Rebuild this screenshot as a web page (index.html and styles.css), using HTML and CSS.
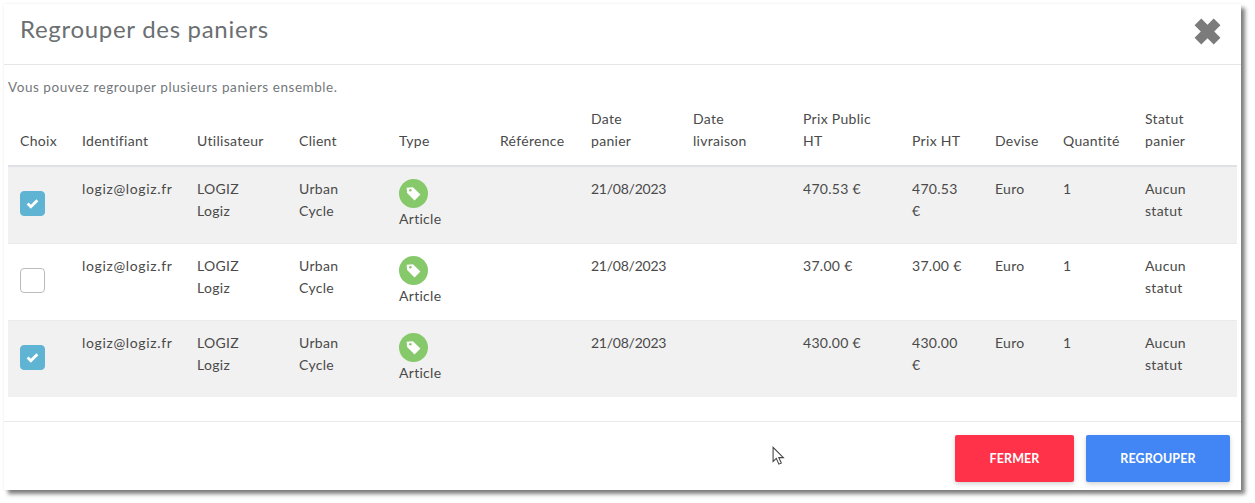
FILE: index.html
```html
<!DOCTYPE html>
<html lang="fr">
<head>
<meta charset="utf-8">
<title>Regrouper des paniers</title>
<link rel="stylesheet" href="styles.css">
</head>
<body>
<div class="modal">
  <header class="modal-header">
    <h1 class="modal-title">Regrouper des paniers</h1>
    <svg class="close-icon" viewBox="0 0 28 28" width="29" height="29" aria-label="Fermer"><path d="M8 1.5 14 7.5 20 1.5 26.5 8 20.5 14 26.5 20 20 26.5 14 20.5 8 26.5 1.5 20 7.5 14 1.5 8Z" fill="#7b7b7b"/></svg>
  </header>
  <div class="modal-body">
    <p class="intro">Vous pouvez regrouper plusieurs paniers ensemble.</p>
    <table class="grid">
      <colgroup>
        <col class="c1"><col class="c2"><col class="c3"><col class="c4"><col class="c5"><col class="c6"><col class="c7"><col class="c8"><col class="c9"><col class="c10"><col class="c11"><col class="c12"><col class="c13">
      </colgroup>
      <thead>
        <tr>
          <th>Choix</th><th>Identifiant</th><th>Utilisateur</th><th>Client</th><th>Type</th><th>Référence</th><th>Date<br>panier</th><th>Date<br>livraison</th><th>Prix Public<br>HT</th><th>Prix HT</th><th>Devise</th><th>Quantité</th><th>Statut<br>panier</th>
        </tr>
      </thead>
      <tbody>
        <tr class="odd">
          <td class="check-cell"><span class="check on"><svg viewBox="0 0 12 10" width="13" height="11"><path d="M1.5 5 4.5 8 10.5 2" fill="none" stroke="#fff" stroke-width="2.6"/></svg></span></td>
          <td class="email">logiz@logiz.fr</td><td>LOGIZ<br>Logiz</td><td>Urban<br>Cycle</td>
          <td class="type-cell"><span class="tag"><svg viewBox="0 0 16 16" width="17" height="17"><path d="M1.5 2.5 7.5 2 14.5 9 9 14.5 2 7.5Z" fill="#fff"/><circle cx="5" cy="5" r="1.2" fill="#86c96b"/></svg></span>Article</td>
          <td></td><td class="date">21/08/2023</td><td></td><td>470.53 €</td><td>470.53<br>€</td><td>Euro</td><td>1</td><td>Aucun<br>statut</td>
        </tr>
        <tr>
          <td class="check-cell"><span class="check"></span></td>
          <td class="email">logiz@logiz.fr</td><td>LOGIZ<br>Logiz</td><td>Urban<br>Cycle</td>
          <td class="type-cell"><span class="tag"><svg viewBox="0 0 16 16" width="17" height="17"><path d="M1.5 2.5 7.5 2 14.5 9 9 14.5 2 7.5Z" fill="#fff"/><circle cx="5" cy="5" r="1.2" fill="#86c96b"/></svg></span>Article</td>
          <td></td><td class="date">21/08/2023</td><td></td><td>37.00 €</td><td>37.00 €</td><td>Euro</td><td>1</td><td>Aucun<br>statut</td>
        </tr>
        <tr class="odd">
          <td class="check-cell"><span class="check on"><svg viewBox="0 0 12 10" width="13" height="11"><path d="M1.5 5 4.5 8 10.5 2" fill="none" stroke="#fff" stroke-width="2.6"/></svg></span></td>
          <td class="email">logiz@logiz.fr</td><td>LOGIZ<br>Logiz</td><td>Urban<br>Cycle</td>
          <td class="type-cell"><span class="tag"><svg viewBox="0 0 16 16" width="17" height="17"><path d="M1.5 2.5 7.5 2 14.5 9 9 14.5 2 7.5Z" fill="#fff"/><circle cx="5" cy="5" r="1.2" fill="#86c96b"/></svg></span>Article</td>
          <td></td><td class="date">21/08/2023</td><td></td><td>430.00 €</td><td>430.00<br>€</td><td>Euro</td><td>1</td><td>Aucun<br>statut</td>
        </tr>
      </tbody>
    </table>
  </div>
  <footer class="modal-footer">
    <svg class="cursor" viewBox="0 0 12 18" width="13" height="20"><path d="M1 1V14L4 11.2 6.3 16.5 8.6 15.5 6.3 10.5H10.5Z" fill="#fff" stroke="#444" stroke-width="1"/></svg>
    <button class="btn btn-red">FERMER</button>
    <button class="btn btn-blue">REGROUPER</button>
  </footer>
</div>
</body>
</html>
```
FILE: styles.css
```css
* { box-sizing: border-box; }
html, body { margin: 0; height: 100%; }
body {
  background: #fff;
  padding: 4px 14px 0 4px;
  font-family: Lato, "Liberation Sans", sans-serif;
  font-size: 14px;
  color: #4a4a4a;
  overflow: hidden;
}
.modal {
  width: 1237px;
  height: 486px;
  background: #fff;
  display: flex;
  flex-direction: column;
  box-shadow: 4px 4px 4px rgba(0,0,0,.5), 0 0 2px rgba(0,0,0,.08);
}
.modal-header {
  height: 61px;
  flex: none;
  display: flex;
  align-items: flex-start;
  justify-content: space-between;
  padding: 11px 19px 0 16px;
  border-bottom: 1px solid #e4e6e8;
}
.modal-title {
  margin: 0;
  font-size: 24px;
  line-height: 28px;
  font-weight: 400;
  letter-spacing: .7px;
  color: #6b6f72;
}
.close-icon { display: block; margin-top: 2px; }
.modal-body { flex: 1; padding: 0 4px; }
.intro {
  margin: 0;
  padding-top: 14px;
  height: 41px;
  font-size: 13.5px;
  line-height: 17px;
  letter-spacing: .55px;
  color: #73777a;
}
.grid {
  width: 1229px;
  border-collapse: collapse;
  table-layout: fixed;
}
.c1 { width: 62px; }
.c2 { width: 115px; }
.c3 { width: 102px; }
.c4 { width: 100px; }
.c5 { width: 101px; }
.c6 { width: 91px; }
.c7 { width: 102px; }
.c8 { width: 110px; }
.c9 { width: 109px; }
.c10 { width: 83px; }
.c11 { width: 68px; }
.c12 { width: 82px; }
.c13 { width: 104px; }
th, td {
  padding: 0 12px;
  line-height: 22px;
  font-weight: 400;
  text-align: left;
  vertical-align: top;
  letter-spacing: .3px;
}
th {
  height: 60px;
  vertical-align: bottom;
  padding-bottom: 13px;
  border-bottom: 2px solid #dee2e6;
}
td {
  height: 77px;
  padding-top: 11px;
  border-bottom: 1px solid #e8eaec;
}
tbody tr:last-child td { border-bottom: 0; }
.odd td { background: #f1f1f1; }
.email { letter-spacing: .65px; }
.date { letter-spacing: -.25px; }
.check-cell { padding-top: 24px; }
.check {
  display: flex;
  align-items: center;
  justify-content: center;
  width: 25px;
  height: 25px;
  border-radius: 4px;
  background: #fff;
  border: 1px solid #b9bcbf;
}
.check.on { background: #5fb3d3; border-color: #5fb3d3; }
.type-cell { padding-top: 12px; line-height: 21px; }
.tag {
  display: flex;
  align-items: center;
  justify-content: center;
  width: 29px;
  height: 29px;
  border-radius: 50%;
  background: #86c96b;
}
.modal-footer {
  height: 69px;
  flex: none;
  display: flex;
  align-items: flex-end;
  justify-content: flex-end;
  gap: 12px;
  padding: 0 11px 8px 0;
  border-top: 1px solid #e8eaec;
  position: relative;
}
.cursor { position: absolute; left: 768px; top: 24px; }
.btn {
  height: 47px;
  border: 0;
  border-radius: 2px;
  color: #fff;
  font-family: inherit;
  font-size: 12.5px;
  font-weight: 700;
  letter-spacing: .1px;
  box-shadow: 0 2px 5px rgba(0,0,0,.18);
}
.btn-red { width: 119px; background: #ff324a; }
.btn-blue { width: 144px; background: #4285f4; }
```
